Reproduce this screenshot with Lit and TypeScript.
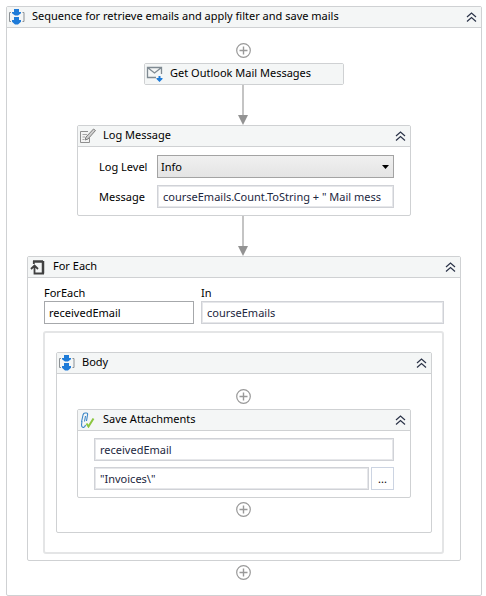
import { LitElement, html, css, svg } from "lit";
import { customElement, property } from "lit/decorators.js";

const icons: Record<string, unknown> = {
  sequence: svg`
    <path d="M3 3.500H1.500V12.500H3M14.500 3.500H16V12.500H14.500" fill="none" stroke="#8b9094"/>
    <path d="M6 0H11V3H13V4.200L10 6.500H7L4 4.200V3H6ZM6 8H11V11H13V12.700L10 15.500H7L4 12.700V11H6Z" fill="#1e7bd8"/>`,
  mail: svg`
    <path d="M10 11.500H1.500V1.500H15.500V8M1.500 1.500L8.500 7L15.500 1.500" fill="none" stroke="#7f8a92" stroke-width="1.300"/>
    <path d="M12.500 10H14.500V12H16.500V13L13.500 16L10.500 13V12H12.500Z" fill="#1e7bd8"/>`,
  log: svg`
    <path d="M10.500 10V14.500H1.500V3.500H9" fill="#f4f4f4" stroke="#8f8f8f"/>
    <path d="M3.500 6.500H8M3.500 9H6M3.500 11.500H5" stroke="#a5a5a5"/>
    <path d="M6 12L7 9L14.500 1L16.500 2.500L9 11Z" fill="#cfcfcf" stroke="#7d7d7d"/>`,
  loop: svg`
    <path d="M4 2.500H14" fill="none" stroke="#404040" stroke-width="2.500"/>
    <path d="M14 2V14.500" fill="none" stroke="#404040" stroke-width="2.500"/>
    <path d="M15 14.500H5.500V7.500M4.800 2V5M2 10L5.500 6.500L9 10" fill="none" stroke="#404040" stroke-width="1.800"/>`,
  attach: svg`
    <path d="M2.500 10L4 3Q4.500 1 6 1H7.500Q9 1 8.500 3L7.500 9M6.500 4L5.500 9.500M3 9L2.500 13Q2.500 15.500 4.500 15.500Q6 15 6.500 13" fill="none" stroke="#3b86c6" stroke-width="1.100"/>
    <path d="M7.500 11.500L9.500 14.500L14.500 6.500" fill="none" stroke="#8bc63f" stroke-width="2"/>`,
};

@customElement("add-button")
class AddButton extends LitElement {
  static styles = css`
    :host { display: flex; justify-content: center; padding-right: 2px; }
    button { display: block; border: 0; padding: 0; background: none; width: 15px; height: 15px; }
    svg { display: block; }
  `;
  render() {
    return html`<button type="button" aria-label="Add activity">
      <svg width="15" height="15" viewBox="0 0 15 15" fill="none" stroke="#999">
        <circle cx="7.500" cy="7.500" r="6.800" stroke-width="1.200"/>
        <path d="M7.500 3.500V11.500M3.500 7.500H11.500" stroke-width="1.400"/>
      </svg></button>`;
  }
}

@customElement("flow-arrow")
class FlowArrow extends LitElement {
  static styles = css`
    :host { display: flex; flex-direction: column; align-items: center; height: 40px; padding-right: 2px; }
    .line { flex: 1; width: 2px; background: #c4c4c4; }
    .head { display: block; }
  `;
  render() {
    return html`<span class="line"></span>
      <svg class="head" width="10" height="10" viewBox="0 0 10 10"><path d="M0 0H10L5 10Z" fill="#939393"/></svg>`;
  }
}

@customElement("activity-card")
class ActivityCard extends LitElement {
  @property() icon = "sequence";
  @property() heading = "";
  @property({ type: Boolean }) compact = false;
  static styles = css`
    :host { display: block; box-sizing: border-box; border: 1px solid #cfd1d3; border-radius: 2px; background: #fff; }
    header { display: flex; align-items: center; box-sizing: border-box; height: 21px; padding: 0 4px 0 1px; background: #f4f6f6; border-bottom: 1px solid #cfd1d3; }
    :host([compact]) header { height: 20px; border-bottom: 0; }
    .icon { flex: none; margin-right: 6px; }
    h2 { flex: 1; min-width: 0; margin: 0; padding-bottom: 2px; font: inherit; line-height: 18px; white-space: nowrap; overflow: hidden; }
    button { flex: none; display: block; border: 0; padding: 0; background: none; }
    .chevrons { display: block; }
  `;
  render() {
    return html`<header>
        <svg class="icon" width="18" height="16" viewBox="0 0 18 16">${icons[this.icon]}</svg>
        <h2>${this.heading}</h2>
        ${this.compact ? "" : html`<button type="button" aria-label="Collapse">
          <svg class="chevrons" width="11" height="10" viewBox="0 0 11 10" fill="none" stroke="#2b3348" stroke-width="1.200"><path d="M1 5L5.500 1L10 5M1 9.500L5.500 5.500L10 9.500"/></svg>
        </button>`}
      </header>
      <slot></slot>`;
  }
}

@customElement("app-root")
class AppRoot extends LitElement {
  static styles = css`
    :host { display: block; box-sizing: border-box; padding: 6px 4px 0 6px; background: #fff; color: #000; font: 11px/16px "Noto Sans", sans-serif; }
    .outer { padding-bottom: 15px; }
    .first { margin: 15px 0 5px; }
    .mail { width: 200px; margin: 0 auto; }
    .inset { margin: 0 70px; }
    .log { display: grid; grid-template-columns: 50px 1fr; column-gap: 8px; row-gap: 7px; align-items: center; padding: 8px 16px 7px 21px; white-space: nowrap; }
    .each { margin: 0 20px 4px; }
    .fields { display: grid; grid-template-columns: 150px 1fr; column-gap: 7px; padding: 7px 16px 7px 16px; }
    input, select { display: block; box-sizing: border-box; width: 100%; min-width: 0; height: 23px; margin: 0; border-radius: 0; font: inherit; color: #000; }
    input { padding: 0 4px; border: 1px solid #a6a8ab; background: #fff; }
    .expr { padding: 0 4px 0 5px; border-color: #d0d2d7; box-shadow: inset 0 0 0 1px #e6e7ea; color: #1c2740; }
    .combo { display: grid; align-items: center; }
    .combo > * { grid-area: 1 / 1; }
    select { appearance: none; padding: 0 20px 0 3px; border: 1px solid #a3a3a3; background: linear-gradient(#f0f0f0, #e4e4e4); }
    .caret { justify-self: end; margin-right: 5px; pointer-events: none; }
    .drop { margin: 0 16px 6px 15px; padding: 19px 10px 19px 11px; border: 2px solid #e4e5e6; border-radius: 3px; }
    .inner { padding-bottom: 15px; }
    .inner-add { margin: 15px 0 5px; }
    .save { margin: 0 20px 4px; }
    .files { display: grid; gap: 6px; padding: 7px 16px 7px; }
    .path { display: flex; gap: 2px; }
    .browse { flex: none; box-sizing: border-box; width: 23px; height: 23px; padding: 0; border: 1px solid #ccd4e2; background: #fff; font: inherit; color: #000; }
  `;
  render() {
    return html`<activity-card class="outer" icon="sequence" heading="Sequence for retrieve emails and apply filter and save mails">
      <add-button class="first"></add-button>
      <activity-card class="mail" icon="mail" heading="Get Outlook Mail Messages" compact></activity-card>
      <flow-arrow></flow-arrow>
      <activity-card class="inset" icon="log" heading="Log Message">
        <div class="log">
          <label for="level">Log Level</label>
          <div class="combo">
            <select id="level"><option>Info</option></select>
            <svg class="caret" width="7" height="4" viewBox="0 0 7 4"><path d="M0 0H7L3.500 4Z"/></svg>
          </div>
          <label for="message">Message</label>
          <input id="message" class="expr" value='courseEmails.Count.ToString + " Mail mess'>
        </div>
      </activity-card>
      <flow-arrow></flow-arrow>
      <activity-card class="each" icon="loop" heading="For Each">
        <div class="fields">
          <label for="item">ForEach</label>
          <label for="list">In</label>
          <input id="item" value="receivedEmail">
          <input id="list" class="expr" value="courseEmails">
        </div>
        <div class="drop">
          <activity-card class="inner" icon="sequence" heading="Body">
            <add-button class="inner-add"></add-button>
            <activity-card class="save" icon="attach" heading="Save Attachments">
              <div class="files">
                <input class="expr" aria-label="Mail message" value="receivedEmail">
                <div class="path">
                  <input class="expr" aria-label="Folder path" value='"Invoices\\"'>
                  <button class="browse" type="button" aria-label="Browse">...</button>
                </div>
              </div>
            </activity-card>
            <add-button></add-button>
          </activity-card>
        </div>
      </activity-card>
      <add-button></add-button>
    </activity-card>`;
  }
}
